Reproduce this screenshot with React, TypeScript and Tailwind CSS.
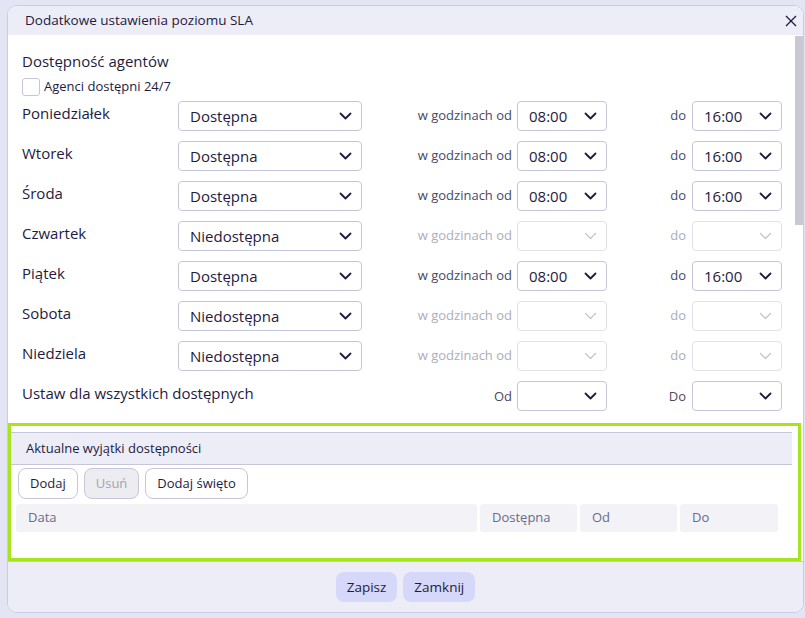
import React from "react";

type Day = { name: string; status: string; from: string; to: string; on: boolean };

const days: Day[] = [
  { name: "Poniedziałek", status: "Dostępna", from: "08:00", to: "16:00", on: true },
  { name: "Wtorek", status: "Dostępna", from: "08:00", to: "16:00", on: true },
  { name: "Środa", status: "Dostępna", from: "08:00", to: "16:00", on: true },
  { name: "Czwartek", status: "Niedostępna", from: "", to: "", on: false },
  { name: "Piątek", status: "Dostępna", from: "08:00", to: "16:00", on: true },
  { name: "Sobota", status: "Niedostępna", from: "", to: "", on: false },
  { name: "Niedziela", status: "Niedostępna", from: "", to: "", on: false },
];

const Chevron = ({ muted }: { muted?: boolean }) => (
  <svg width="13" height="8" viewBox="0 0 13 8" fill="none">
    <path
      d="M1.5 1.5 L6.5 6.5 L11.5 1.5"
      stroke={muted ? "#c4c4cf" : "#1e1b3f"}
      strokeWidth={muted ? 1.3 : 1.8}
      strokeLinecap="round"
      strokeLinejoin="round"
    />
  </svg>
);

const Select = ({
  value,
  width,
  muted,
}: {
  value: string;
  width: string;
  muted?: boolean;
}) => (
  <div
    className={`${width} h-[30px] flex items-center justify-between pl-[11px] pr-[9px] rounded-[4px] border ${
      muted ? "border-[#e1e1ea]" : "border-[#c6c6da]"
    } bg-white text-[15px] text-[#1e1b3f]`}
  >
    <span>{value}</span>
    <Chevron muted={muted} />
  </div>
);

const App = () => {
  return (
    <div
      className="w-[805px] h-[618px] overflow-hidden bg-[#e3e4f4] pt-[5px] pl-[7px]"
      style={{ fontFamily: '"Open Sans", "Noto Sans", sans-serif' }}
    >
      <div className="w-[797px] h-[608px] flex flex-col rounded-[10px] border border-[#cbcce2] bg-white overflow-hidden text-[#1e1b3f]">
        {/* header */}
        <div className="h-[29px] shrink-0 flex items-center justify-between bg-[#ededf7] pl-[17px] pr-[6px]">
          <span className="text-[13.5px]">Dodatkowe ustawienia poziomu SLA</span>
          <svg width="12" height="12" viewBox="0 0 12 12">
            <path d="M1 1 L11 11 M11 1 L1 11" stroke="#1e1b3f" strokeWidth="1.3" />
          </svg>
        </div>

        {/* body */}
        <div className="relative flex-1 flex flex-col">
          <div className="absolute right-0 top-[1px] w-[8px] h-[189px] bg-[#c9c9d2]" />

          <div className="pl-[14px] pt-[16px]">
            <div className="text-[15px] leading-[20px]">Dostępność agentów</div>
            <label className="mt-[7px] flex items-center gap-[4px] h-[18px]">
              <span className="w-[18px] h-[18px] rounded-[3px] border border-[#c6c6da] bg-white" />
              <span className="text-[13px]">Agenci dostępni 24/7</span>
            </label>

            <div className="mt-[5px] flex flex-col gap-[10px]">
              {days.map((d) => (
                <div key={d.name} className="flex items-start h-[30px]">
                  <div className="w-[156px] text-[15px] leading-[24px]">{d.name}</div>
                  <Select value={d.status} width="w-[184px]" />
                  <div
                    className={`w-[155px] h-[30px] flex items-center justify-end pr-[5px] text-[13px] ${
                      d.on ? "text-[#4a4862]" : "text-[#adadb9]"
                    }`}
                  >
                    w godzinach od
                  </div>
                  <Select value={d.from} width="w-[90px]" muted={!d.on} />
                  <div
                    className={`w-[85px] h-[30px] flex items-center justify-end pr-[6px] text-[13px] ${
                      d.on ? "text-[#4a4862]" : "text-[#adadb9]"
                    }`}
                  >
                    do
                  </div>
                  <Select value={d.to} width="w-[90px]" muted={!d.on} />
                </div>
              ))}

              <div className="flex items-start h-[30px]">
                <div className="w-[340px] text-[15px] leading-[24px]">
                  Ustaw dla wszystkich dostępnych
                </div>
                <div className="w-[155px] h-[30px] flex items-center justify-end pr-[5px] pt-[2px] text-[13px] text-[#4a4862]">
                  Od
                </div>
                <Select value="" width="w-[90px]" />
                <div className="w-[85px] h-[30px] flex items-center justify-end pr-[6px] pt-[2px] text-[13px] text-[#4a4862]">
                  Do
                </div>
                <Select value="" width="w-[90px]" />
              </div>
            </div>
          </div>

          {/* exceptions section */}
          <div className="mt-[12px] w-[793px] h-[138px] border-[3px] border-[#a6e41d] pt-[6px]">
            <div className="mr-[6px] h-[33px] flex items-center bg-[#ededf7] border-y border-[#c6c6da] pl-[15px] text-[13px]">
              Aktualne wyjątki dostępności
            </div>
            <div className="mt-[3px] pl-[7px] flex gap-[6px]">
              <button className="h-[31px] px-[11px] rounded-[8px] border border-[#c6c6da] bg-white text-[13px]">
                Dodaj
              </button>
              <button className="h-[31px] px-[11px] rounded-[8px] border border-[#c6c6da] bg-[#ececf1] text-[13px] text-[#a4a4b1]">
                Usuń
              </button>
              <button className="h-[31px] px-[11px] rounded-[8px] border border-[#c6c6da] bg-white text-[13px]">
                Dodaj święto
              </button>
            </div>
            <div className="mt-[5px] ml-[5px] flex gap-[3px] text-[13px] text-[#6c6a8a]">
              <div className="w-[461px] h-[28px] flex items-center pl-[12px] rounded-[3px] bg-[#f2f2f7]">Data</div>
              <div className="w-[97px] h-[28px] flex items-center pl-[12px] rounded-[3px] bg-[#f2f2f7]">Dostępna</div>
              <div className="w-[97px] h-[28px] flex items-center pl-[12px] rounded-[3px] bg-[#f2f2f7]">Od</div>
              <div className="w-[98px] h-[28px] flex items-center pl-[12px] rounded-[3px] bg-[#f2f2f7]">Do</div>
            </div>
          </div>
        </div>

        {/* footer */}
        <div className="h-[51px] shrink-0 flex items-center justify-center gap-[6px] bg-[#ededf7] border-t border-[#c6c6da]">
          <button className="h-[30px] px-[11px] rounded-[8px] bg-[#d5d8f8] text-[13.5px]">Zapisz</button>
          <button className="h-[30px] px-[11px] rounded-[8px] bg-[#d5d8f8] text-[13.5px]">Zamknij</button>
        </div>
      </div>
    </div>
  );
};

export default App;
